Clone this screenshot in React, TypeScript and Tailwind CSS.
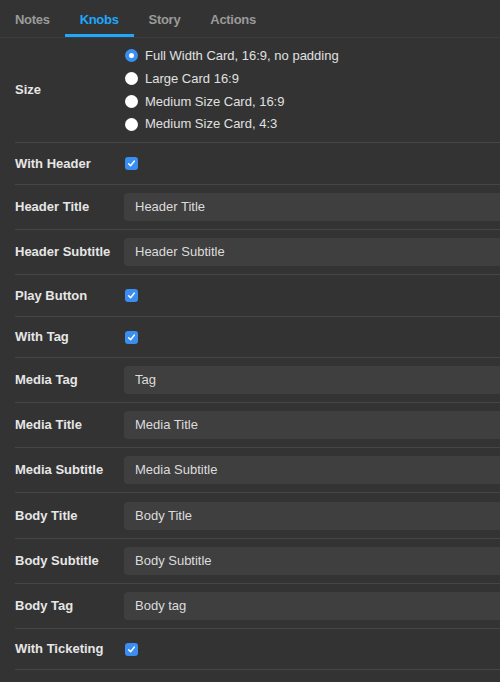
import React from "react";

type Row =
  | { kind: "check"; label: string; h: string }
  | { kind: "input"; label: string; value: string; h: string };

const rows: Row[] = [
  { kind: "check", label: "With Header", h: "h-[42px]" },
  { kind: "input", label: "Header Title", value: "Header Title", h: "h-[45px]" },
  { kind: "input", label: "Header Subtitle", value: "Header Subtitle", h: "h-[45px]" },
  { kind: "check", label: "Play Button", h: "h-[42px]" },
  { kind: "check", label: "With Tag", h: "h-[41px]" },
  { kind: "input", label: "Media Tag", value: "Tag", h: "h-[45px]" },
  { kind: "input", label: "Media Title", value: "Media Title", h: "h-[45px]" },
  { kind: "input", label: "Media Subtitle", value: "Media Subtitle", h: "h-[45px]" },
  { kind: "input", label: "Body Title", value: "Body Title", h: "h-[46px]" },
  { kind: "input", label: "Body Subtitle", value: "Body Subtitle", h: "h-[45px]" },
  { kind: "input", label: "Body Tag", value: "Body tag", h: "h-[45px]" },
  { kind: "check", label: "With Ticketing", h: "h-[41px]" },
];

function Checkbox() {
  return (
    <div className="w-[13px] h-[13px] rounded-[3px] bg-[#3a8ef2] flex items-center justify-center">
      <svg width="9" height="9" viewBox="0 0 9 9" fill="none">
        <path d="M1.6 4.8 L3.6 6.8 L7.4 2" stroke="white" strokeWidth="1.4" strokeLinecap="round" strokeLinejoin="round" />
      </svg>
    </div>
  );
}

function Radio({ selected }: { selected?: boolean }) {
  return selected ? (
    <div className="w-[13px] h-[13px] rounded-full bg-[#3a8ef2] flex items-center justify-center">
      <div className="w-[5px] h-[5px] rounded-full bg-white" />
    </div>
  ) : (
    <div className="w-[13px] h-[13px] rounded-full bg-white" />
  );
}

const radios = [
  "Full Width Card, 16:9, no padding",
  "Large Card 16:9",
  "Medium Size Card, 16:9",
  "Medium Size Card, 4:3",
];

export default function App() {
  return (
    <div className="w-[500px] h-[682px] overflow-hidden bg-[#333333] font-['Liberation_Sans','Arial',sans-serif] text-[13px]">
      <div className="flex h-[38px] border-b border-[#3d3d3d] bg-[#333333] tracking-[-0.3px]">
        <div className="px-[15px] flex items-center font-bold text-[#9a9a9a] border-b-[3px] border-transparent pt-[5px]">Notes</div>
        <div className="px-[15px] flex items-center font-bold text-[#1ea7fd] border-b-[3px] border-[#1ea7fd] pt-[5px]">Knobs</div>
        <div className="px-[15px] flex items-center font-bold text-[#9a9a9a] border-b-[3px] border-transparent pt-[5px]">Story</div>
        <div className="px-[15px] flex items-center font-bold text-[#9a9a9a] border-b-[3px] border-transparent pt-[5px]">Actions</div>
      </div>
      <div className="pl-[15px]">
        <div className="flex items-center h-[105px] border-b border-[#464646]">
          <div className="w-[109px] font-bold text-[#e6e6e6]">Size</div>
          <div className="flex flex-col">
            {radios.map((r, i) => (
              <div key={r} className="flex items-center h-[22.7px] gap-[7px] pl-[1px]">
                <Radio selected={i === 0} />
                <span className="text-[#e0e0e0]">{r}</span>
              </div>
            ))}
          </div>
        </div>
        {rows.map((row) => (
          <div key={row.label} className={`flex items-center border-b border-[#464646] ${row.h}`}>
            <div className="w-[109px] shrink-0 font-bold text-[#e6e6e6] whitespace-nowrap">{row.label}</div>
            {row.kind === "check" ? (
              <div className="pl-[1px]">
                <Checkbox />
              </div>
            ) : (
              <div className="flex-1 h-[28px] rounded-l-[4px] bg-[#3f3f3f] flex items-center pl-[11px] text-[#dcdcdc]">
                {row.value}
              </div>
            )}
          </div>
        ))}
      </div>
    </div>
  );
}
